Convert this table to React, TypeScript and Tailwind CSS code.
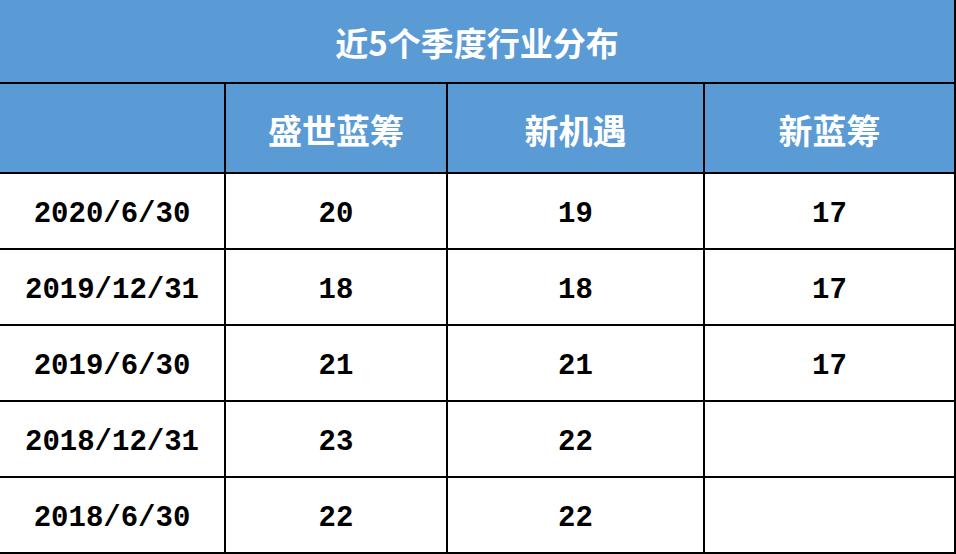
import React from 'react';

const funds = ['盛世蓝筹', '新机遇', '新蓝筹'];

const rows: { date: string; values: (number | null)[] }[] = [
  { date: '2020/6/30', values: [20, 19, 17] },
  { date: '2019/12/31', values: [18, 18, 17] },
  { date: '2019/6/30', values: [21, 21, 17] },
  { date: '2018/12/31', values: [23, 22, null] },
  { date: '2018/6/30', values: [22, 22, null] },
];

// column widths include the 2px right border
const colWidths = ['w-[226px]', 'w-[222px]', 'w-[257px]', 'w-[251px]'];

const cjk = { fontFamily: '"Noto Sans CJK SC", "Noto Sans", sans-serif' };
const mono = { fontFamily: '"Liberation Mono", "DejaVu Sans Mono", monospace' };

const App: React.FC = () => {
  return (
    <div className="w-[956px] h-[554px] bg-white flex flex-col">
      {/* Title */}
      <div
        className="h-[84px] flex items-center justify-center bg-[#5b9bd5] border-r-2 border-b-2 border-black text-white text-[33px] font-bold pt-[4px]"
        style={cjk}
      >
        近5个季度行业分布
      </div>

      {/* Header */}
      <div className="h-[90px] flex bg-[#5b9bd5]">
        <div className={`${colWidths[0]} h-full border-r-2 border-b-2 border-black`} />
        {funds.map((name, i) => (
          <div
            key={name}
            className={`${colWidths[i + 1]} h-full flex items-center justify-center border-r-2 border-b-2 border-black text-white text-[34px] font-bold pt-[2px]`}
            style={cjk}
          >
            {name}
          </div>
        ))}
      </div>

      {/* Body */}
      {rows.map(row => (
        <div key={row.date} className="h-[76px] flex">
          <div
            className={`${colWidths[0]} h-full flex items-center justify-center border-r-2 border-b-2 border-black text-black text-[29px] font-bold pt-[8px]`}
            style={mono}
          >
            {row.date}
          </div>
          {row.values.map((v, i) => (
            <div
              key={i}
              className={`${colWidths[i + 1]} h-full flex items-center justify-center border-r-2 border-b-2 border-black text-black text-[29px] font-bold pt-[8px]`}
              style={mono}
            >
              {v ?? ''}
            </div>
          ))}
        </div>
      ))}
    </div>
  );
};

export default App;
